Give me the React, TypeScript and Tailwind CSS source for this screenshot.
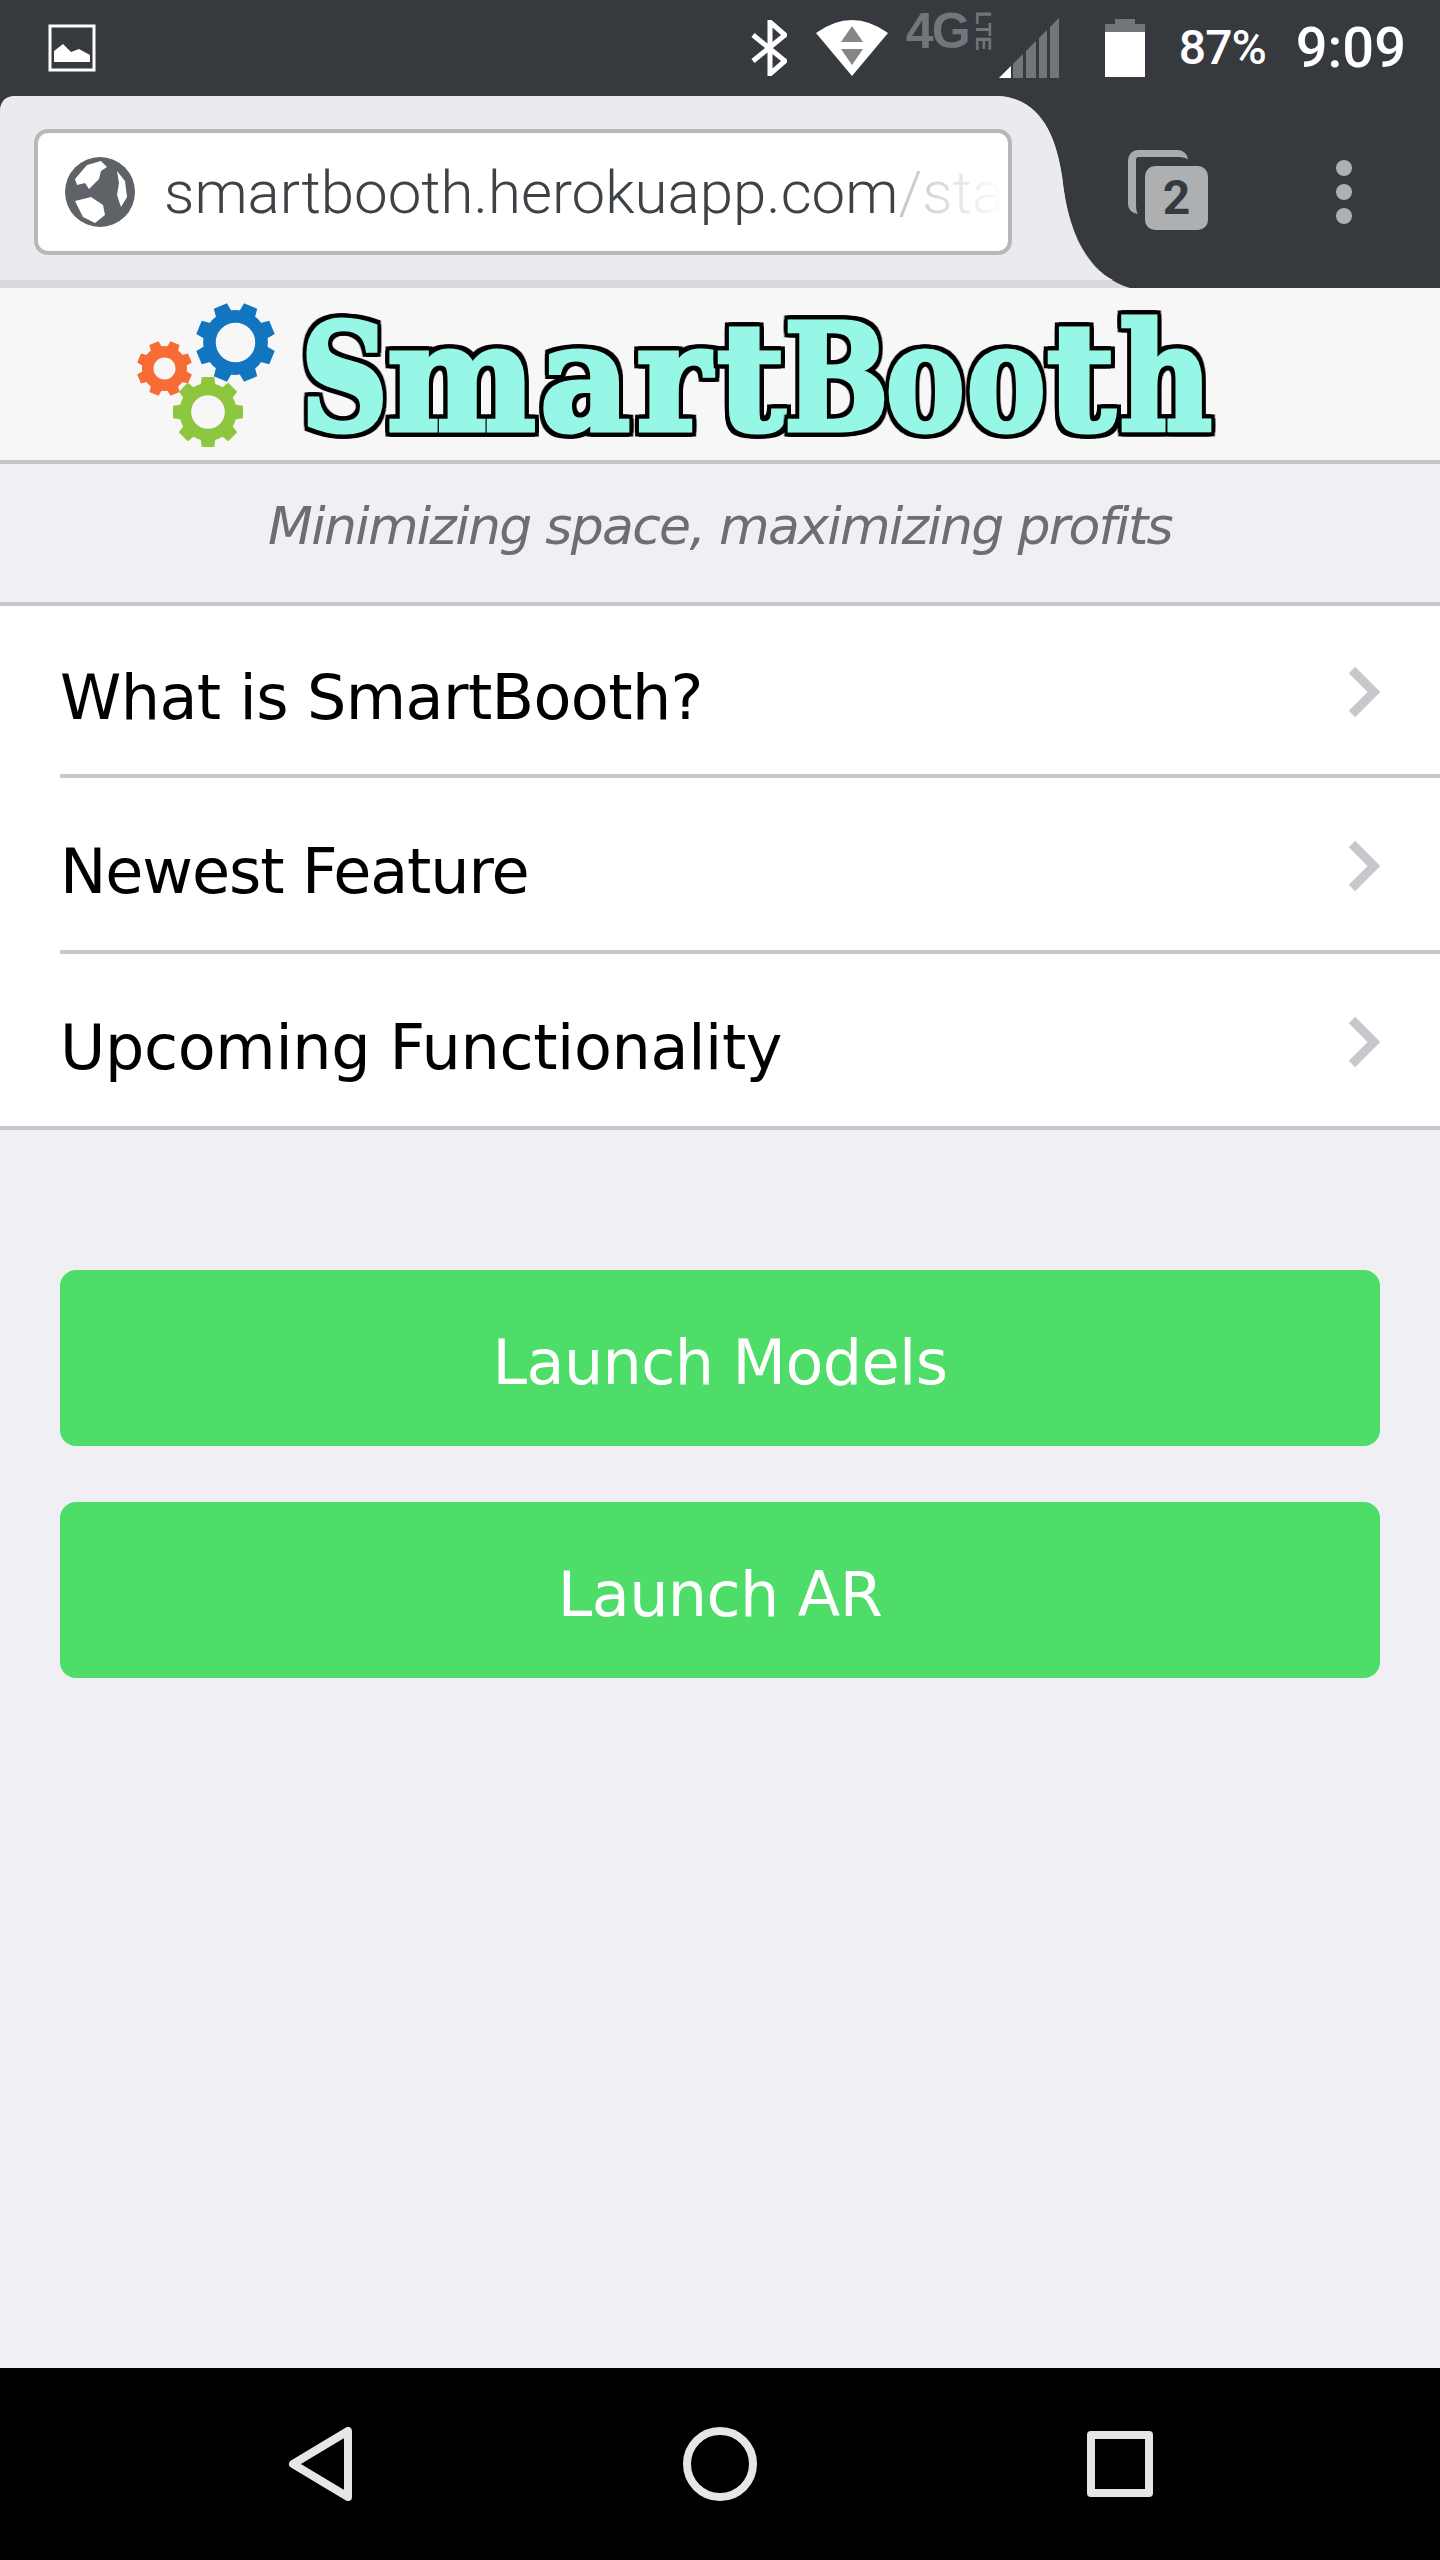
const rows = [
  { label: "What is SmartBooth?", height: "h-[172px]", border: true, spacing: "tracking-[-0.6px]" },
  { label: "Newest Feature", height: "h-[176px]", border: true, spacing: "tracking-[-1.1px]" },
  { label: "Upcoming Functionality", height: "h-[172px]", border: false, spacing: "tracking-[-0.35px]" },
];

const logoLetters = [
  { ch: "S", box: "w-[85px]", squeeze: "scale-x-[.82]" },
  { ch: "m", box: "w-[149px]", squeeze: "scale-x-[.95]" },
  { ch: "a", box: "w-[98px]", squeeze: "scale-x-[.94]" },
  { ch: "r", box: "w-[80px]", squeeze: "scale-x-[.96]" },
  { ch: "t", box: "w-[74px]", squeeze: "scale-x-[1]" },
  { ch: "B", box: "w-[97px]", squeeze: "scale-x-[.84]" },
  { ch: "o", box: "w-[81px]", squeeze: "scale-x-[.8]" },
  { ch: "o", box: "w-[81px]", squeeze: "scale-x-[.8]" },
  { ch: "t", box: "w-[68px]", squeeze: "scale-x-[1]" },
  { ch: "h", box: "w-[102px]", squeeze: "scale-x-[.86]" },
];

function Gear({ color, size, hole, offset }: { color: string; size: number; hole: number; offset: number }) {
  const items = Array.from({ length: 8 }, (_, i) => 45 * i + offset);
  return (
    <svg width={size} height={size} viewBox="0 0 100 100">
      {items.map((angle) => (
        <path key={angle} d="M41 0h18l3 22H38z" fill={color} transform={`rotate(${angle} 50 50)`} />
      ))}
      <circle cx="50" cy="50" r={(hole + 41) / 2} fill="none" stroke={color} strokeWidth={41 - hole} />
    </svg>
  );
}

function Chevron() {
  return (
    <svg className="mt-[4px]" width="32" height="52" viewBox="0 0 32 52">
      <path d="M4 4l22 22L4 48" fill="none" stroke="#c7c7cc" strokeWidth="9" />
    </svg>
  );
}

function StatusBar() {
  return (
    <div className="flex h-[96px] items-center bg-[#363a3f] pr-[34px] pl-[48px] text-white">
      <svg width="48" height="48" viewBox="0 0 48 48">
        <rect x="2" y="2" width="44" height="44" fill="none" stroke="white" strokeWidth="3" />
        <path d="M6 38V27l9-7 8 8 8-3 11 6v7z" fill="white" />
      </svg>
      <div className="ml-auto flex items-center">
        <svg width="36" height="56" viewBox="0 0 36 56">
          <path d="M2 15l32 26-15 13V2l15 13L2 41" fill="none" stroke="white" strokeWidth="5" />
        </svg>
        <svg className="ml-[29px]" width="72" height="56" viewBox="0 0 72 56">
          <path d="M0 13Q36-13 72 13L36 56z" fill="white" />
          <path d="M36 6l11 16H25z" fill="#85888b" />
          <path d="M25 29h22L36 45z" fill="#85888b" />
        </svg>
        <span className="relative -top-[17px] ml-[18px] flex w-[87px] items-center text-[#72767b]">
          <span className="font-['Liberation_Sans',sans-serif] text-[50px] leading-[38px] font-bold tracking-[-2px]">4G</span>
          <span className="ml-[5px] font-['Liberation_Sans',sans-serif] text-[22px] leading-[19px] font-bold [writing-mode:vertical-rl]">LTE</span>
        </span>
        <svg className="ml-[6px]" width="60" height="60" viewBox="0 0 60 60">
          <path d="M0 60 60 0v60z" fill="#72767b" />
          <path d="M0 60l12-12v12z" fill="white" />
          <path d="M12 0h2v60h-2zM24 0h3v60h-3zM37 0h3v60h-3zM48 0h3v60h-3z" fill="#363a3f" />
        </svg>
        <svg className="ml-[46px]" width="40" height="58" viewBox="0 0 40 58">
          <path d="M10 0h20v5h10v9H0V5h10z" fill="#72767b" />
          <path d="M0 13h40v45H0z" fill="white" />
        </svg>
        <span className="ml-[34px] font-['Roboto',sans-serif] text-[48px] font-medium tracking-[-1px]">87%</span>
        <span className="ml-[30px] font-['Roboto',sans-serif] text-[56px] font-medium">9:09</span>
      </div>
    </div>
  );
}

function Toolbar() {
  return (
    <div className="relative h-[192px] bg-[#363a3f]">
      <svg className="absolute inset-0" width="1440" height="192" viewBox="0 0 1440 192">
        <path d="M0 16Q0 0 16 0H995C1040 0 1056 40 1062 80C1068 140 1090 180 1130 192H0z" fill="#d9d9de" />
        <path d="M0 16Q0 0 16 0H995C1040 0 1056 40 1062 80C1068 136 1084 170 1113 184H0z" fill="#ebebef" />
      </svg>
      <div className="relative flex h-full items-start pt-[33px] pl-[34px]">
        <div className="flex h-[126px] w-[978px] items-center overflow-hidden rounded-[14px] border-[4px] border-[#b8b8b8] bg-white pl-[27px]">
          <svg className="shrink-0" width="70" height="70" viewBox="0 0 70 70">
            <circle cx="35" cy="35" r="35" fill="#5f6368" />
            <path d="M22 8l14-4 6 6-6 4-2 8-10 10-4-6-8 2-2-6zM52 14l8 10 2 16-6 10-4-12 2-12zM10 44l16-4 12 8 2 10-10 8-12-6z" fill="white" />
          </svg>
          <span className="mt-[2px] ml-[29px] font-['Roboto',sans-serif] text-[60px] font-light whitespace-nowrap text-[#3e4246]">
            smartbooth.herokuapp.com<span className="bg-linear-to-r from-[#c4c4c4] to-white bg-clip-text text-transparent">/sta</span>
          </span>
        </div>
      </div>
      <div className="absolute top-[54px] left-[1128px]">
        <div className="absolute top-0 left-0 h-[64px] w-[60px] rounded-[10px] border-t-[7px] border-l-[8px] border-[#a8aaac]" />
        <div className="absolute top-[16px] left-[17px] flex h-[64px] w-[63px] items-center justify-center rounded-[10px] bg-[#adafb1] font-['Roboto',sans-serif] text-[48px] font-bold text-[#363a3f]">2</div>
      </div>
      <div className="absolute top-[64px] left-[1336px] flex flex-col gap-[8px]">
        <span className="h-[16px] w-[16px] rounded-full bg-[#adafb1]" />
        <span className="h-[16px] w-[16px] rounded-full bg-[#adafb1]" />
        <span className="h-[16px] w-[16px] rounded-full bg-[#adafb1]" />
      </div>
    </div>
  );
}

function LogoHeader() {
  return (
    <div className="flex h-[176px] items-center border-b-[4px] border-[#c4c4c4] bg-[#f7f7f7] pl-[137px]">
      <div className="relative h-[144px] w-[165px] shrink-0">
        <div className="absolute top-[39px] left-0"><Gear color="#f76b35" size={55} hole={20} offset={22.5} /></div>
        <div className="absolute top-[1px] left-[59px]"><Gear color="#1175bf" size={79} hole={25} offset={22.5} /></div>
        <div className="absolute top-[75px] left-[36px]"><Gear color="#8dc63f" size={70} hole={24} offset={0} /></div>
      </div>
      <div className="mt-[7px] flex font-['DejaVu_Serif',serif] text-[148px] leading-none font-bold text-[#96f7e6]">
        {logoLetters.map((letter, index) => (
          <span key={index} className={`flex justify-center ${letter.box}`}>
            <span className={`inline-block ${letter.squeeze} [-webkit-text-stroke:5px_#96f7e6] [filter:drop-shadow(4px_0_0_black)_drop-shadow(-4px_0_0_black)_drop-shadow(0_4px_0_black)_drop-shadow(0_-4px_0_black)]`}>
              {letter.ch}
            </span>
          </span>
        ))}
      </div>
    </div>
  );
}

function Nav() {
  return (
    <div className="flex h-[192px] items-center justify-center bg-black">
      <div className="relative h-[74px] w-[1040px]">
        <svg className="absolute top-0 left-[88px]" width="66" height="74" viewBox="0 0 66 74">
          <path d="M60 4v66L5 37z" fill="none" stroke="#e6e6e6" strokeWidth="8" strokeLinejoin="round" />
        </svg>
        <div className="absolute top-0 left-[483px] h-[74px] w-[74px] rounded-full border-[8px] border-[#e6e6e6]" />
        <div className="absolute top-[4px] left-[887px] h-[66px] w-[66px] rounded-[4px] border-[8px] border-[#e6e6e6]" />
      </div>
    </div>
  );
}

export default function App() {
  return (
    <div className="flex h-[2560px] w-[1440px] flex-col bg-[#efeff4] font-['DejaVu_Sans',sans-serif]">
      <StatusBar />
      <Toolbar />
      <LogoHeader />
      <div className="flex h-[138px] items-center justify-center pb-[14px] text-[52px] tracking-[-1.7px] text-[#6d6d72] italic">
        Minimizing space, maximizing profits
      </div>
      <div className="border-y-[4px] border-[#c8c7cc] bg-white pl-[60px]">
        {rows.map((row) => (
          <div key={row.label} className={`flex items-center justify-between pr-[60px] ${row.height} ${row.border ? "border-b-[4px] border-[#c8c7cc]" : ""}`}>
            <span className={`pt-[14px] text-[62px] text-black ${row.spacing}`}>{row.label}</span>
            <Chevron />
          </div>
        ))}
      </div>
      <div className="flex flex-1 flex-col gap-[56px] px-[60px] pt-[140px]">
        <button type="button" className="h-[176px] rounded-[16px] bg-[#4edd68] pt-[8px] text-[62px] tracking-[-0.6px] text-white">Launch Models</button>
        <button type="button" className="h-[176px] rounded-[16px] bg-[#4edd68] pt-[8px] text-[62px] tracking-[-0.6px] text-white">Launch AR</button>
      </div>
      <Nav />
    </div>
  );
}
